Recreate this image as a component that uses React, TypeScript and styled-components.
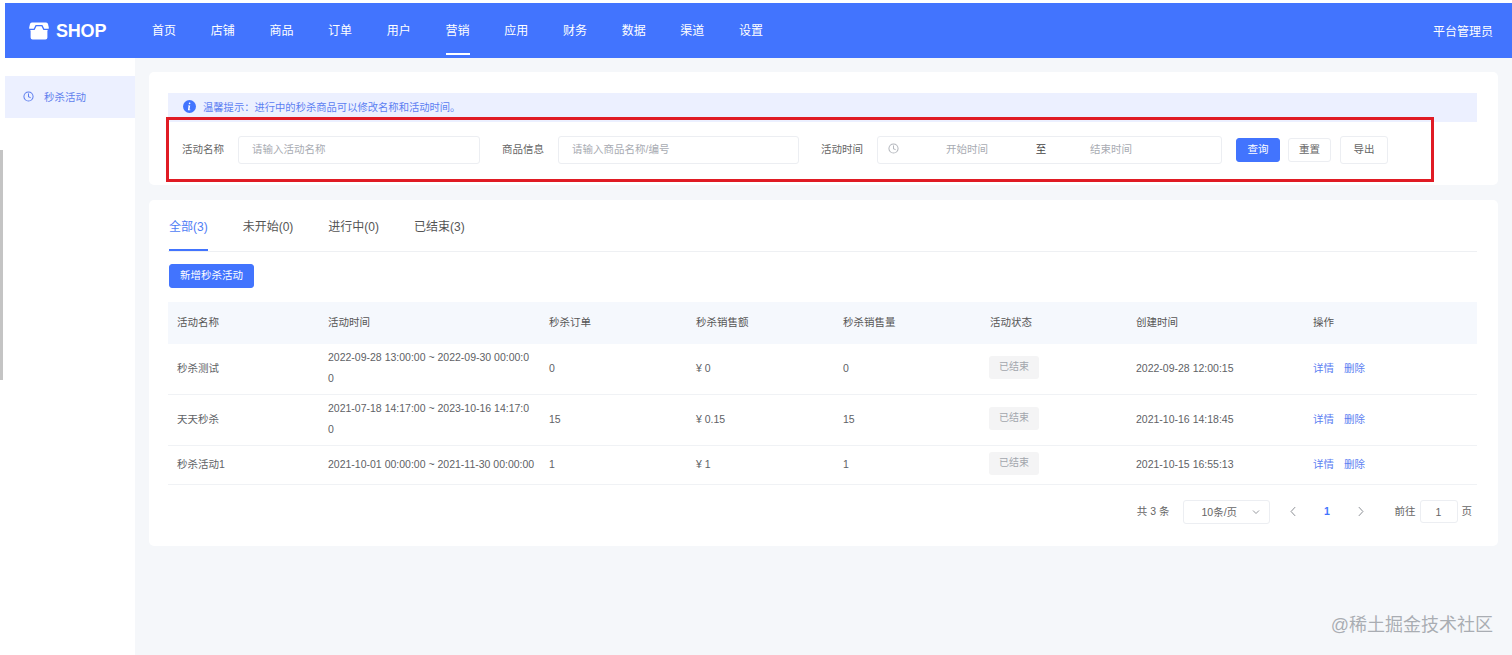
import React from "react";
import styled, { createGlobalStyle } from "styled-components";

const Global = createGlobalStyle`
  html, body { margin: 0; padding: 0; background: #fff; }
  body { font-family: "Liberation Sans", "Noto Sans CJK SC", sans-serif; font-size: 10.5px; color: #606266; }
  * { box-sizing: border-box; }
`;

const Page = styled.div`
  position: relative;
  display: flex;
  width: 1512px;
  height: 655px;
  overflow: hidden;
  background: #fff;
`;
const Gutter = styled.div`
  flex: none;
  width: 5px;
  padding-top: 150px;
`;
const Thumb = styled.div`
  width: 3px;
  height: 230px;
  background: #c4c4c4;
`;
const Frame = styled.div`
  flex: 1;
  display: flex;
  flex-direction: column;
  padding-top: 3px;
  min-width: 0;
`;
const Header = styled.header`
  flex: none;
  height: 55px;
  display: flex;
  align-items: stretch;
  background: #4274fe;
  color: #fff;
  padding: 0 18px 0 24px;
`;
const Logo = styled.div`
  width: 123px;
  display: flex;
  align-items: center;
  gap: 7px;
  font-size: 18px;
  font-weight: 700;
  letter-spacing: -0.2px;
  padding-top: 1px;
`;
const Nav = styled.nav`
  flex: 1;
  display: flex;
  gap: 34.7px;
`;
const NavItem = styled.a<{ $active?: boolean }>`
  display: flex;
  align-items: center;
  height: 52px;
  padding-top: 3px;
  font-size: 12px;
  color: #fff;
  border-bottom: 2px solid ${(p) => (p.$active ? "#fff" : "transparent")};
`;
const User = styled.div`
  display: flex;
  align-items: center;
  font-size: 12px;
  padding-bottom: 1px;
  margin-right: 1px;
`;
const Body = styled.div`
  flex: 1;
  display: flex;
  min-height: 0;
`;
const Sidebar = styled.aside`
  flex: none;
  width: 130px;
  padding-top: 18px;
  background: #fff;
`;
const SideItem = styled.div`
  height: 42px;
  display: flex;
  align-items: center;
  gap: 10px;
  padding: 0 0 2px 18px;
  background: #ecf0ff;
  color: #5f7fee;
`;
const Main = styled.main`
  flex: 1;
  min-width: 0;
  background: #f5f7fa;
  padding: 14px 14px 0;
  display: flex;
  flex-direction: column;
  gap: 15px;
`;
const Card = styled.section`
  background: #fff;
  border-radius: 5px;
`;
const FilterCard = styled(Card)`
  height: 113px;
  padding: 21px 21px 0 19px;
`;
const Alert = styled.div`
  height: 29px;
  display: flex;
  align-items: center;
  gap: 7px;
  padding: 0 0 2px 15px;
  background: #ecf0ff;
  color: #5c80f2;
  font-size: 10.3px;
`;
const FilterRow = styled.div`
  display: flex;
  align-items: center;
  padding: 14px 0 0 14px;
`;
const Label = styled.label`
  flex: none;
  width: 42px;
  margin-right: 14px;
  padding-bottom: 3px;
  white-space: nowrap;
  color: #666;
`;
const TextInput = styled.div<{ $w: number }>`
  flex: none;
  width: ${(p) => p.$w}px;
  height: 28px;
  margin-right: 22px;
  padding: 0 0 3px 13px;
  display: flex;
  align-items: center;
  border: 1px solid #eceef2;
  border-radius: 3px;
  color: #a8abb2;
`;
const Range = styled.div`
  flex: none;
  width: 345px;
  height: 28px;
  margin-right: 14px;
  padding: 0 0 3px 10px;
  display: flex;
  align-items: center;
  border: 1px solid #eceef2;
  border-radius: 3px;
  color: #a8abb2;
`;
const RangeCell = styled.span<{ $w: number; $dark?: boolean }>`
  flex: none;
  width: ${(p) => p.$w}px;
  text-align: center;
  color: ${(p) => (p.$dark ? "#444" : "#a8abb2")};
`;
const Btn = styled.button<{ $primary?: boolean; $w: number; $h: number; $mr?: number }>`
  flex: none;
  width: ${(p) => p.$w}px;
  height: ${(p) => p.$h}px;
  margin-right: ${(p) => p.$mr ?? 0}px;
  padding: 0 0 3px;
  font: inherit;
  border-radius: 3px;
  border: 1px solid ${(p) => (p.$primary ? "#4274fe" : "#eceef2")};
  background: ${(p) => (p.$primary ? "#4274fe" : "#fff")};
  color: ${(p) => (p.$primary ? "#fff" : "#666")};
`;
const RedFrame = styled.div`
  position: absolute;
  left: 166px;
  top: 117px;
  width: 1268px;
  height: 65px;
  border: 3px solid #e01b24;
  pointer-events: none;
`;
const ListCard = styled(Card)`
  height: 346px;
  padding: 0 21px 0 19px;
`;
const Tabs = styled.div`
  height: 52px;
  display: flex;
  gap: 35px;
  padding-left: 1px;
  border-bottom: 1px solid #eef0f3;
`;
const Tab = styled.a<{ $active?: boolean }>`
  height: 51px;
  padding-top: 2px;
  display: flex;
  align-items: center;
  font-size: 12px;
  color: ${(p) => (p.$active ? "#4f7df5" : "#555")};
  border-bottom: 2px solid ${(p) => (p.$active ? "#4274fe" : "transparent")};
  margin-bottom: -1px;
`;
const Toolbar = styled.div`
  padding: 12px 0 14px 1px;
  display: flex;
`;
const Table = styled.table`
  width: 100%;
  table-layout: fixed;
  border-collapse: collapse;
`;
const Th = styled.th`
  height: 42px;
  padding: 0 9px 4px;
  text-align: left;
  font-weight: 400;
  background: #f5f8fd;
  color: #555;
`;
const Tr = styled.tr<{ $h: number }>`
  height: ${(p) => p.$h}px;
  border-bottom: 1px solid #f0f2f5;
`;
const Td = styled.td`
  padding: 0 9px 1px;
  color: #606266;
  line-height: 21px;
  word-break: break-all;
`;
const TimeTd = styled(Td)<{ $single?: boolean }>`
  white-space: ${(p) => (p.$single ? "nowrap" : "normal")};
`;
const Tag = styled.span`
  display: inline-flex;
  align-items: center;
  justify-content: center;
  width: 50px;
  height: 23px;
  margin: -1px 0 0 -1px;
  padding-bottom: 3px;
  background: #f4f4f5;
  border-radius: 3px;
  color: #a3a6ad;
  font-size: 10px;
  vertical-align: middle;
`;
const LinkBtn = styled.a`
  color: #5c80f2;
  margin-right: 10px;
`;
const Pager = styled.div`
  display: flex;
  align-items: center;
  justify-content: flex-end;
  height: 54px;
  padding: 0 5px 0 0;
`;
const PagerText = styled.span<{ $mr?: number; $ml?: number }>`
  margin: 0 ${(p) => p.$mr ?? 0}px 2px ${(p) => p.$ml ?? 0}px;
  color: #666;
  white-space: nowrap;
`;
const Select = styled.div`
  width: 87px;
  height: 24px;
  margin-right: 17px;
  padding: 0 6px 0 18px;
  display: flex;
  align-items: center;
  justify-content: space-between;
  border: 1px solid #eceef2;
  border-radius: 3px;
  color: #666;
`;
const PageArrow = styled.span`
  width: 14px;
  display: flex;
  justify-content: center;
  color: #8a8d93;
`;
const PageNum = styled.span`
  width: 53px;
  margin-bottom: 2px;
  text-align: center;
  color: #4274fe;
  font-weight: 700;
`;
const JumpInput = styled.div`
  width: 38px;
  height: 23px;
  margin: 0 4px;
  display: flex;
  align-items: center;
  justify-content: center;
  border: 1px solid #eceef2;
  border-radius: 3px;
  color: #666;
`;
const Watermark = styled.div`
  position: absolute;
  right: 19px;
  top: 612px;
  font-size: 18px;
  line-height: 26px;
  color: #a9adb3;
  text-shadow: 0 0 1px #fff;
`;

const StoreIcon = () => (
  <svg width="20" height="18" viewBox="0 0 20 18">
    <path fill="#fff" d="M3 0.500h14a2 2 0 0 1 2 1.600l0.800 3.400c0.200 1.200-0.400 2.500-1.400 3V15.500a2 2 0 0 1-2 2H3.600a2 2 0 0 1-2-2V8.500c-1-.5-1.600-1.800-1.400-3L1 2.100A2 2 0 0 1 3 0.500z" />
    <path fill="none" stroke="#4274fe" strokeWidth="1.300" d="M0 7.300h5.200L7 3.600h6l1.800 3.700H20" />
  </svg>
);
const ClockIcon = ({ size, color }: { size: number; color: string }) => (
  <svg width={size} height={size} viewBox="0 0 12 12" fill="none" stroke={color} strokeWidth="1.100" strokeLinecap="round">
    <circle cx="6" cy="6" r="5" />
    <path d="M6 3v3.200l2 1" />
  </svg>
);
const InfoIcon = () => (
  <svg width="13" height="13" viewBox="0 0 13 13">
    <circle cx="6.500" cy="6.500" r="6.500" fill="#4274fe" />
    <rect x="5.800" y="2.600" width="1.600" height="1.600" rx="0.800" fill="#fff" />
    <path d="M5.200 5.400h2l-.7 4.100h.8v.7H4.900l.6-4.100h-.5z" fill="#fff" />
  </svg>
);
const Chevron = ({ dir, size }: { dir: "left" | "right" | "down"; size: number }) => {
  const d = dir === "left" ? "M6.500 1L2.800 5l3.700 4" : dir === "right" ? "M3.500 1L7.200 5 3.500 9" : "M2 3.500L5 6.500 8 3.500";
  return (
    <svg width={size} height={size} viewBox="0 0 10 10" fill="none" stroke="currentColor" strokeWidth="0.900">
      <path d={d} />
    </svg>
  );
};

const navItems = ["首页", "店铺", "商品", "订单", "用户", "营销", "应用", "财务", "数据", "渠道", "设置"];
const columns = [
  { t: "活动名称", w: 151 },
  { t: "活动时间", w: 221 },
  { t: "秒杀订单", w: 147 },
  { t: "秒杀销售额", w: 147 },
  { t: "秒杀销售量", w: 147 },
  { t: "活动状态", w: 146 },
  { t: "创建时间", w: 177 },
  { t: "操作", w: 173 },
];
const rows = [
  { h: 50, name: "秒杀测试", time: "2022-09-28 13:00:00 ~ 2022-09-30 00:00:00", single: false, orders: "0", amount: "¥ 0", qty: "0", created: "2022-09-28 12:00:15" },
  { h: 51, name: "天天秒杀", time: "2021-07-18 14:17:00 ~ 2023-10-16 14:17:00", single: false, orders: "15", amount: "¥ 0.15", qty: "15", created: "2021-10-16 14:18:45" },
  { h: 39, name: "秒杀活动1", time: "2021-10-01 00:00:00 ~ 2021-11-30 00:00:00", single: true, orders: "1", amount: "¥ 1", qty: "1", created: "2021-10-15 16:55:13" },
];

export default function App() {
  return (
    <Page>
      <Global />
      <Gutter>
        <Thumb />
      </Gutter>
      <Frame>
        <Header>
          <Logo>
            <StoreIcon />
            SHOP
          </Logo>
          <Nav>
            {navItems.map((n) => (
              <NavItem key={n} $active={n === "营销"}>
                {n}
              </NavItem>
            ))}
          </Nav>
          <User>平台管理员</User>
        </Header>
        <Body>
          <Sidebar>
            <SideItem>
              <ClockIcon size={11} color="#5f7fee" />
              秒杀活动
            </SideItem>
          </Sidebar>
          <Main>
            <FilterCard>
              <Alert>
                <InfoIcon />
                温馨提示：进行中的秒杀商品可以修改名称和活动时间。
              </Alert>
              <FilterRow>
                <Label>活动名称</Label>
                <TextInput $w={242}>请输入活动名称</TextInput>
                <Label>商品信息</Label>
                <TextInput $w={241}>请输入商品名称/编号</TextInput>
                <Label>活动时间</Label>
                <Range>
                  <ClockIcon size={11} color="#b4b7bd" />
                  <RangeCell $w={136}>开始时间</RangeCell>
                  <RangeCell $w={12} $dark>至</RangeCell>
                  <RangeCell $w={128}>结束时间</RangeCell>
                </Range>
                <Btn $primary $w={44} $h={24} $mr={8}>查询</Btn>
                <Btn $w={43} $h={24} $mr={9}>重置</Btn>
                <Btn $w={48} $h={28}>导出</Btn>
              </FilterRow>
            </FilterCard>
            <ListCard>
              <Tabs>
                <Tab $active>全部(3)</Tab>
                <Tab>未开始(0)</Tab>
                <Tab>进行中(0)</Tab>
                <Tab>已结束(3)</Tab>
              </Tabs>
              <Toolbar>
                <Btn $primary $w={85} $h={24}>新增秒杀活动</Btn>
              </Toolbar>
              <Table>
                <colgroup>
                  {columns.map((c) => (
                    <col key={c.t} width={c.w} />
                  ))}
                </colgroup>
                <thead>
                  <tr>
                    {columns.map((c) => (
                      <Th key={c.t}>{c.t}</Th>
                    ))}
                  </tr>
                </thead>
                <tbody>
                  {rows.map((r) => (
                    <Tr key={r.name} $h={r.h}>
                      <Td>{r.name}</Td>
                      <TimeTd $single={r.single}>{r.time}</TimeTd>
                      <Td>{r.orders}</Td>
                      <Td>{r.amount}</Td>
                      <Td>{r.qty}</Td>
                      <Td><Tag>已结束</Tag></Td>
                      <Td>{r.created}</Td>
                      <Td>
                        <LinkBtn>详情</LinkBtn>
                        <LinkBtn>删除</LinkBtn>
                      </Td>
                    </Tr>
                  ))}
                </tbody>
              </Table>
              <Pager>
                <PagerText $mr={13}>共 3 条</PagerText>
                <Select>
                  10条/页
                  <PageArrow><Chevron dir="down" size={10} /></PageArrow>
                </Select>
                <PageArrow><Chevron dir="left" size={11} /></PageArrow>
                <PageNum>1</PageNum>
                <PageArrow><Chevron dir="right" size={11} /></PageArrow>
                <PagerText $ml={27}>前往</PagerText>
                <JumpInput>1</JumpInput>
                <PagerText>页</PagerText>
              </Pager>
            </ListCard>
          </Main>
        </Body>
      </Frame>
      <RedFrame />
      <Watermark>@稀土掘金技术社区</Watermark>
    </Page>
  );
}
